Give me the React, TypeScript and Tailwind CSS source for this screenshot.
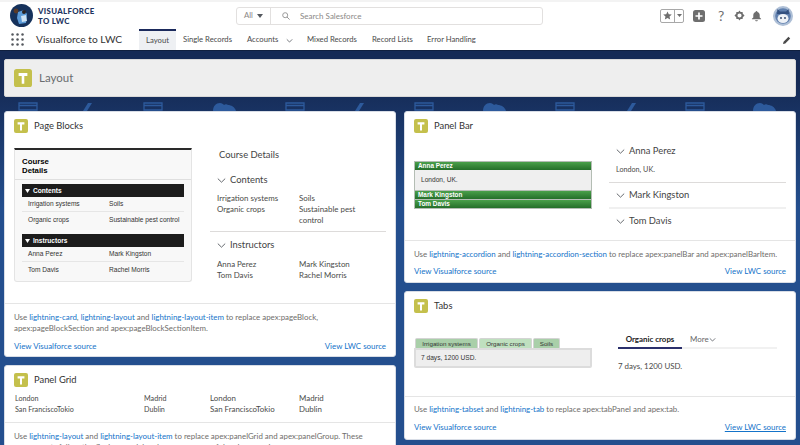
import React from "react";

const F = "[font-family:Lato,'Noto_Sans',sans-serif]";

function Tile({ size = 14 }: { size?: number }) {
  return (
    <svg width={size} height={size} viewBox="0 0 14 14" className="shrink-0">
      <rect width="14" height="14" rx="2" fill="#c4c04c" />
      <path d="M3.600 3.200h6.800v2.200H8v6H6v-6H3.600z" fill="#fff" />
    </svg>
  );
}

function Chev({ open = true }: { open?: boolean }) {
  return (
    <svg width="9" height="9" viewBox="0 0 9 9" className="shrink-0" fill="none" stroke="#54585e" strokeWidth="0.9">
      {open ? <path d="M0.800 2.600 4.500 6.200 8.200 2.600" /> : <path d="M2.800 0.800 6.400 4.500 2.800 8.200" />}
    </svg>
  );
}

function A({ children }: { children: React.ReactNode }) {
  return <span className="text-[#1473c9]">{children}</span>;
}

function Links({ underline = false }: { underline?: boolean }) {
  return (
    <div className="flex justify-between text-[7.900px] leading-[11px] text-[#1473c9]">
      <span>View Visualforce source</span>
      <span className={underline ? "underline" : ""}>View LWC source</span>
    </div>
  );
}

function CardHead({ title }: { title: string }) {
  return (
    <div className="flex h-[14px] items-center gap-[6px]">
      <Tile />
      <span className="text-[9.400px] text-[#333]">{title}</span>
    </div>
  );
}

function Card({ children, className }: { children: React.ReactNode; className: string }) {
  return <section className={`shrink-0 rounded-[3px] border border-[#d8dde6] bg-white ${className}`}>{children}</section>;
}

function LegacyBar({ title }: { title: string }) {
  return (
    <div className="mx-[7px] flex h-[13px] items-center gap-[3px] bg-[#1c1c1c] pl-[3px] font-bold text-white">
      <svg width="5" height="4" viewBox="0 0 5 4"><path d="M0 0h5L2.500 4z" fill="#fff" /></svg>
      <span>{title}</span>
    </div>
  );
}

function LegacyRow({ a, b, line }: { a: string; b: string; line?: boolean }) {
  return (
    <div className={`mx-[7px] grid h-[15px] grid-cols-[81px_1fr] items-center pl-[6px] ${line ? "border-b border-[#e6e6e6]" : ""}`}>
      <span>{a}</span>
      <span className="whitespace-nowrap">{b}</span>
    </div>
  );
}

function BarGreen({ t }: { t: string }) {
  return (
    <div className="flex h-[8px] items-center bg-gradient-to-b from-[#4aa04a] to-[#256f2a] pl-[3px] text-[6.400px] font-bold text-white">
      {t}
    </div>
  );
}

function Accordion({ t, open }: { t: string; open?: boolean }) {
  return (
    <div className="flex items-center gap-[4px] text-[9.400px] leading-[12px] text-[#444]">
      <Chev open={open} />
      <span>{t}</span>
    </div>
  );
}

function BgIcons() {
  const card = (x: number) => (
    <path key={`c${x}`} d={`M${x - 9} 103h18v7h-18z M${x - 9} 105.500h18`} fill="none" stroke="#2d5a9c" strokeWidth="1.3" />
  );
  const slash = (x: number) => <path key={`s${x}`} d={`M${x - 5} 111l5-8h4l-5 8z`} fill="#2d5a9c" />;
  const cloud = (x: number) => (
    <path key={`k${x}`} d={`M${x - 12} 111c0-5 3-8 7-8 2 0 3 1 4 2 1-1 3-1 4 0 3 0 7 2 8 6z`} fill="#2d5a9c" />
  );
  return (
    <svg width="800" height="394" viewBox="0 51 800 394" className="absolute left-0 top-0">
      {[28, 153, 295, 424, 565, 695].map(card)}
      {[88, 360, 632].map(slash)}
      {[225, 495, 765].map(cloud)}
    </svg>
  );
}

export default function App() {
  return (
    <div className={`flex h-[445px] w-[800px] flex-col overflow-hidden bg-white text-[#4a4a48] ${F}`}>
      <div className="h-[2px] shrink-0 bg-[#f3f3f3]" />
      {/* global header */}
      <header className="flex h-[27px] shrink-0 items-center pl-[10px] pr-[7px]">
        <svg width="23" height="23" viewBox="0 0 23 23" className="shrink-0">
          <circle cx="11.500" cy="11.500" r="11.500" fill="#16325c" />
          <path d="M8 8l6-2 3 4-1 9-7 1-2-6z" fill="#5b9bd8" />
          <circle cx="6" cy="7" r="2.400" fill="#5a3a28" />
          <circle cx="14" cy="8" r="2" fill="#2a2220" />
          <path d="M11 12l5-1 1 6-5 1z" fill="#cfe3f4" />
        </svg>
        <div className="ml-[5px] w-[198px] shrink-0 text-[7.800px] font-black leading-[10px] tracking-[0.35px] text-[#1d3461]">
          VISUALFORCE<br />TO LWC
        </div>
        <div className="flex h-[18px] w-[307px] shrink-0 items-center rounded-[3px] border border-[#e2e0df] text-[7.800px] text-[#8a8886]">
          <div className="flex h-full w-[34px] items-center justify-center gap-[4px] border-r border-[#e2e0df]">
            <span>All</span>
            <svg width="6" height="4" viewBox="0 0 6 4"><path d="M0 0h6L3 4z" fill="#54585e" /></svg>
          </div>
          <svg width="8" height="8" viewBox="0 0 8 8" className="ml-[11px]" fill="none" stroke="#9a9a9a">
            <circle cx="3.200" cy="3.200" r="2.500" /><path d="M5 5l2.600 2.600" />
          </svg>
          <span className="ml-[10px] text-[8px]">Search Salesforce</span>
        </div>
        <div className="ml-[117px] flex h-[14px] w-[24px] shrink-0 items-stretch rounded-[2px] border border-[#a8a8a8]">
          <div className="flex w-[14px] items-center justify-center border-r border-[#a8a8a8]">
            <svg width="9" height="9" viewBox="0 0 24 24"><path d="M12 1l3.400 7.400 8 .9-6 5.400 1.700 8L12 18.700 4.900 22.700l1.700-8-6-5.400 8-.9z" fill="#6e6e6e" /></svg>
          </div>
          <div className="flex flex-1 items-center justify-center">
            <svg width="5" height="3" viewBox="0 0 5 3"><path d="M0 0h5L2.500 3z" fill="#6e6e6e" /></svg>
          </div>
        </div>
        <svg width="12" height="12" viewBox="0 0 12 12" className="ml-[9px] shrink-0">
          <rect width="12" height="12" rx="2.500" fill="#6e6e6e" />
          <path d="M6 2.500v7M2.500 6h7" stroke="#fff" strokeWidth="1.700" />
        </svg>
        <span className="ml-[13px] w-[8px] shrink-0 text-[14px] leading-[14px] text-[#707070]">?</span>
        <svg width="11" height="11" viewBox="0 0 24 24" className="ml-[8px] shrink-0" fill="#6e6e6e">
          <path fillRule="evenodd" d="M12 1l2.500 3.500 4.300-.4.400 4.300L23 12l-3.800 3.600-.4 4.300-4.300-.4L12 23l-2.500-3.500-4.300.4-.4-4.300L1 12l3.800-3.600.4-4.300 4.300.4zM12 7.500a4.500 4.500 0 100 9 4.500 4.500 0 000-9z" />
        </svg>
        <svg width="11" height="12" viewBox="0 0 24 24" className="ml-[6px] shrink-0" fill="#6e6e6e">
          <path d="M12 1c1.200 0 2 .9 2 2 3.500 1 5 4 5 7v5l3 3v1H2v-1l3-3v-5c0-3 1.500-6 5-7 0-1.100.8-2 2-2zM9 21h6c0 1.300-1.300 2.500-3 2.500S9 22.300 9 21z" />
        </svg>
        <svg width="20" height="20" viewBox="0 0 20 20" className="ml-[11px] shrink-0">
          <circle cx="10" cy="10" r="10" fill="#aebfd6" />
          <circle cx="10" cy="10" r="7.800" fill="#5f7fae" />
          <path d="M4.500 3l2.500 2.500h6L15.500 3l.5 5H4z" fill="#33507f" />
          <ellipse cx="10" cy="12.500" rx="5.500" ry="4.500" fill="#eef2f7" />
          <circle cx="8" cy="12" r="0.900" fill="#2b3f63" /><circle cx="12" cy="12" r="0.900" fill="#2b3f63" />
        </svg>
      </header>
      {/* nav */}
      <nav className="flex h-[22px] shrink-0 items-stretch border-b border-[#10203f] pl-[11px] pr-[9px] text-[#4a4a4a]">
        <div className="flex items-center">
          <svg width="13" height="13" viewBox="0 0 13 13" fill="#54585e">
            {[1.500, 6.500, 11.500].flatMap((x) =>
              [1.500, 6.500, 11.500].map((y) => <circle key={`${x}-${y}`} cx={x} cy={y} r="1.250" />)
            )}
          </svg>
        </div>
        <div className="ml-[12px] flex w-[103px] items-center text-[10.200px] text-[#333]">Visualforce to LWC</div>
        <div className="flex w-[37px] items-center justify-center border-t-[2px] border-[#1b2a5c] bg-[#eef0f3] text-[7.700px]">Layout</div>
        <div className="ml-[7px] flex items-center pt-[1px] text-[7.700px]">
          <span className="w-[64px]">Single Records</span>
          <span className="w-[39px]">Accounts</span>
          <svg width="7" height="7" viewBox="0 0 9 9" fill="none" stroke="#54585e"><path d="M1 3l3.500 3.500L8 3" /></svg>
          <span className="ml-[14px] w-[65px]">Mixed Records</span>
          <span className="w-[55px]">Record Lists</span>
          <span>Error Handling</span>
        </div>
        <div className="ml-auto flex items-center">
          <svg width="8" height="8" viewBox="0 0 8 8"><path d="M0 8l.6-2.300L5.500.8 7.200 2.500 2.300 7.400z" fill="#4a4a4a" /></svg>
        </div>
      </nav>
      {/* page */}
      <main className="relative min-h-0 flex-1 bg-gradient-to-b from-[#152a55] from-[8%] to-[#244f8e] to-[40%] px-[4px] pt-[8px]">
        <BgIcons />
        <div className="relative flex h-[38px] items-center gap-[7px] rounded-[2px] border border-[#d8d8d8] bg-[#eeeeee] pl-[9px]">
          <Tile size={18} />
          <span className="text-[11.500px] text-[#6a6d70]">Layout</span>
        </div>
        <div className="relative mt-[14px] grid grid-cols-[392px_392px] gap-x-[8px]">
          {/* left */}
          <div className="flex flex-col gap-[8px]">
            <Card className="h-[246px] pl-[9px] pr-[9px] pt-[7px]">
              <CardHead title="Page Blocks" />
              <div className="mt-[15px] grid h-[134px] grid-cols-[178px_1fr]">
                <div className="rounded-b-[3px] border-x border-b border-t-[2px] border-[#e4e4e4] border-t-[#2a2a2a] bg-[#f8f8f8] font-['Liberation_Sans',Arial,sans-serif] text-[6.600px] text-[#333]">
                  <div className="h-[30px] border-b border-[#dfdfdf] pl-[7px] pt-[7px] text-[7.800px] font-bold leading-[9px] text-black">
                    Course<br />Details
                  </div>
                  <div className="mt-[4px]"><LegacyBar title="Contents" /></div>
                  <LegacyRow a="Irrigation systems" b="Soils" line />
                  <LegacyRow a="Organic crops" b="Sustainable pest control" />
                  <div className="mt-[7px]"><LegacyBar title="Instructors" /></div>
                  <LegacyRow a="Anna Perez" b="Mark Kingston" line />
                  <LegacyRow a="Tom Davis" b="Rachel Morris" />
                </div>
                <div className="ml-[18px] text-[7.900px] leading-[11px]">
                  <div className="ml-[9px] mt-[1px] text-[9.400px] leading-[12px] text-[#444]">Course Details</div>
                  <div className="ml-[7px] mt-[13px]"><Accordion t="Contents" /></div>
                  <div className="ml-[7px] mt-[7px] grid grid-cols-[82px_1fr]">
                    <span>Irrigation systems</span><span>Soils</span>
                    <span>Organic crops</span><span>Sustainable pest<br />control</span>
                  </div>
                  <div className="mt-[5px] border-t border-[#dddbda]" />
                  <div className="ml-[7px] mt-[7px]"><Accordion t="Instructors" /></div>
                  <div className="ml-[7px] mt-[8px] grid grid-cols-[82px_1fr]">
                    <span>Anna Perez</span><span>Mark Kingston</span>
                    <span>Tom Davis</span><span>Rachel Morris</span>
                  </div>
                </div>
              </div>
              <div className="-mx-[9px] mt-[21px] border-t border-[#e5e5e5] px-[9px] pt-[8px] text-[7.900px] leading-[11px] text-[#706e6b]">
                Use <A>lightning-card</A>, <A>lightning-layout</A> and <A>lightning-layout-item</A> to replace apex:pageBlock,
                <br />apex:pageBlockSection and apex:pageBlockSectionItem.
                <div className="mt-[7px]"><Links /></div>
              </div>
            </Card>
            <Card className="h-[100px] pl-[9px] pr-[9px] pt-[7px]">
              <CardHead title="Panel Grid" />
              <div className="mt-[6px] grid grid-cols-[129px_66px_89px_1fr] pl-[1px] text-[7.200px] leading-[11px]">
                <span>London</span><span>Madrid</span><span className="text-[7.900px]">London</span><span className="text-[7.900px]">Madrid</span>
                <span>San FranciscoTokio</span><span>Dublin</span><span className="text-[7.900px]">San FranciscoTokio</span><span className="text-[7.900px]">Dublin</span>
              </div>
              <div className="-mx-[9px] mt-[7px] border-t border-[#e5e5e5] px-[9px] pt-[8px] text-[7.900px] leading-[11px] text-[#706e6b]">
                Use <A>lightning-layout</A> and <A>lightning-layout-item</A> to replace apex:panelGrid and apex:panelGroup. These
                <br />components follow the flexbox model and are more powerful and responsive.
              </div>
            </Card>
          </div>
          {/* right */}
          <div className="flex flex-col gap-[8px]">
            <Card className="h-[172px] pl-[9px] pr-[9px] pt-[7px]">
              <CardHead title="Panel Bar" />
              <div className="grid h-[100px] grid-cols-[178px_1fr]">
                <div className="mt-[28px] flex h-[48px] flex-col gap-[1px] bg-[#b4bdb4] p-[1px] font-['Liberation_Sans',Arial,sans-serif]">
                  <div className="flex flex-col">
                    <BarGreen t="Anna Perez" />
                    <div className="flex h-[20px] items-center bg-[#efefef] pl-[6px] text-[6.600px] text-[#333]">London, UK.</div>
                  </div>
                  <BarGreen t="Mark Kingston" />
                  <BarGreen t="Tom Davis" />
                </div>
                <div className="ml-[17px] pt-[12px]">
                  <div className="ml-[7px]"><Accordion t="Anna Perez" open /></div>
                  <div className="ml-[7px] mt-[8px] text-[7.200px] leading-[10px]">London, UK.</div>
                  <div className="mt-[7px] border-t border-[#dddbda]" />
                  <div className="ml-[7px] mt-[6px]"><Accordion t="Mark Kingston" /></div>
                  <div className="mt-[6px] border-t-[2px] border-[#f0f0f0]" />
                  <div className="ml-[7px] mt-[6px]"><Accordion t="Tom Davis" /></div>
                </div>
              </div>
              <div className="-mx-[9px] mt-[7px] border-t border-[#e5e5e5] px-[9px] pt-[8px] text-[7.900px] leading-[11px] text-[#706e6b]">
                Use <A>lightning-accordion</A> and <A>lightning-accordion-section</A> to replace apex:panelBar and apex:panelBarItem.
                <div className="mt-[6px]"><Links /></div>
              </div>
            </Card>
            <Card className="h-[149px] pl-[9px] pr-[9px] pt-[7px]">
              <CardHead title="Tabs" />
              <div className="grid h-[76px] grid-cols-[178px_1fr]">
                <div className="pt-[25px] font-['Liberation_Sans',Arial,sans-serif] text-[6.200px] text-[#333]">
                  <div className="flex h-[10px] items-stretch gap-[1px] pl-[1px]">
                    <span className="flex w-[63px] items-center justify-center rounded-t-[2px] border-x border-t border-[#d4d4d4] bg-[#a9cfa9]">Irrigation systems</span>
                    <span className="flex w-[53px] items-center justify-center rounded-t-[2px] border-x border-t border-[#d4d4d4] bg-[#bfe0bf]">Organic crops</span>
                    <span className="flex w-[27px] items-center justify-center rounded-t-[2px] border-x border-t border-[#d4d4d4] bg-[#a9cfa9]">Soils</span>
                  </div>
                  <div className="flex h-[20px] items-center rounded-b-[2px] border-[2px] border-[#dcdcdc] bg-[#eeeeee] pl-[5px] text-[6.600px]">7 days, 1200 USD.</div>
                </div>
                <div className="ml-[26px] mr-[9px] pt-[21px]">
                  <div className="flex h-[15px] items-start border-b-[2px] border-[#f1f1f1]">
                    <span className="h-[15px] w-[64px] border-b-[2px] border-[#2a2f6b] text-center text-[7.900px] font-bold leading-[11px] text-[#222]">Organic crops</span>
                    <span className="ml-[8px] flex items-center text-[7.900px] leading-[11px] text-[#666]">
                      More
                      <svg width="7" height="7" viewBox="0 0 9 9" fill="none" stroke="#54585e"><path d="M1 3l3.500 3.500L8 3" /></svg>
                    </span>
                  </div>
                  <div className="mt-[12px] text-[7.900px] leading-[11px]">7 days, 1200 USD.</div>
                </div>
              </div>
              <div className="-mx-[9px] mt-[7px] border-t border-[#e5e5e5] px-[9px] pt-[7px] text-[7.900px] leading-[11px] text-[#706e6b]">
                Use <A>lightning-tabset</A> and <A>lightning-tab</A> to replace apex:tabPanel and apex:tab.
                <div className="mt-[7px]"><Links underline /></div>
              </div>
            </Card>
            <Card className="h-[40px]"><span /></Card>
          </div>
        </div>
      </main>
    </div>
  );
}
